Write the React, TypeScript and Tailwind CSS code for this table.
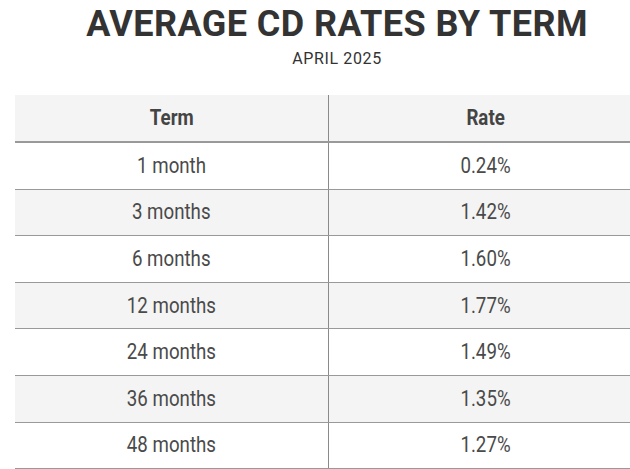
const ROWS = [
  { term: "1 month", rate: "0.24%" },
  { term: "3 months", rate: "1.42%" },
  { term: "6 months", rate: "1.60%" },
  { term: "12 months", rate: "1.77%" },
  { term: "24 months", rate: "1.49%" },
  { term: "36 months", rate: "1.35%" },
  { term: "48 months", rate: "1.27%" },
];

function Cell({ children, bold = false }: { children: React.ReactNode; bold?: boolean }) {
  return (
    <div className="flex items-center justify-center">
      <span
        className={`inline-block scale-x-[0.85] text-[22px] leading-none ${
          bold ? "font-bold text-[#444]" : "text-[#4a4a4a]"
        }`}
      >
        {children}
      </span>
    </div>
  );
}

export default function App() {
  return (
    <div className="w-[630px] h-[469px] overflow-hidden bg-white font-['Roboto',sans-serif]">
      <div className="pl-[44px] pt-[3px] text-center">
        <h1 className="text-[36px] font-bold leading-[42px] text-[#333] tracking-[0.012em]">
          AVERAGE CD RATES BY TERM
        </h1>
        <p className="mt-[5px] text-[16px] leading-[18px] text-[#333] tracking-[0.04em]">APRIL 2025</p>
      </div>

      <div className="ml-[15px] mt-[27px] w-[628px]">
        <div className="grid h-[48px] grid-cols-2 border-b-2 border-[#999] bg-[#f4f4f4]">
          <div className="flex items-center justify-center border-r border-[#8a8a8a]">
            <span className="inline-block scale-x-[0.85] text-[22px] font-bold leading-none text-[#444]">
              Term
            </span>
          </div>
          <Cell bold>Rate</Cell>
        </div>
        {ROWS.map((r, i) => (
          <div
            key={r.term}
            className={`grid h-[46.6px] grid-cols-2 border-b border-[#999] ${
              i % 2 === 1 ? "bg-[#f4f4f4]" : "bg-white"
            }`}
          >
            <div className="flex items-center justify-center border-r border-[#8a8a8a]">
              <span className="inline-block scale-x-[0.85] text-[22px] leading-none text-[#4a4a4a]">
                {r.term}
              </span>
            </div>
            <Cell>{r.rate}</Cell>
          </div>
        ))}
      </div>
    </div>
  );
}
